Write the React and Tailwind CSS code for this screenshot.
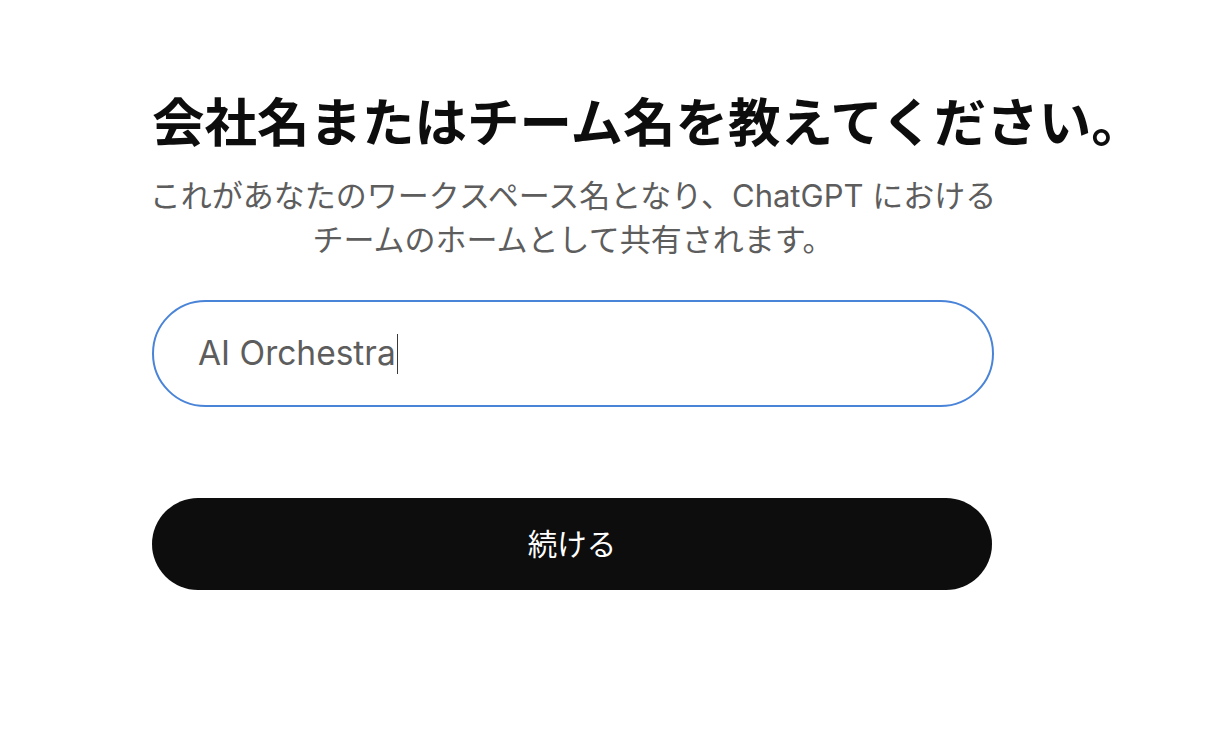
import React from "react";

const font = { fontFamily: 'Inter, "Noto Sans CJK JP", sans-serif' };

export default function App() {
  return (
    <div className="min-h-screen bg-white" style={font}>
      <div className="ml-[152px] w-[842px] pt-[92px] flex flex-col">
        <h1 className="text-center whitespace-nowrap text-[52.5px] leading-[62px] font-bold text-[#0d0d0d]">
          会社名またはチーム名を教えてください。
        </h1>
        <p className="-mx-[20px] mt-[20px] text-center whitespace-nowrap text-[31px] leading-[44px] text-[#5d5d5d]">
          これがあなたのワークスペース名となり、ChatGPT における
          <br />
          チームのホームとして共有されます。
        </p>

        <div className="mt-[38px] h-[107px] rounded-full border-2 border-[#4a84d8] flex items-center pl-[44px]">
          <span className="text-[33.5px] text-[#5d5d5d]">AI Orchestra</span>
          <span className="ml-[1px] w-[1.5px] h-[40px] bg-[#3a3a3a]" />
        </div>

        <button
          type="button"
          className="mt-[91px] h-[92px] w-[840px] rounded-full bg-[#0d0d0d] text-white text-[29.5px] flex items-center justify-center"
        >
          続ける
        </button>
      </div>
    </div>
  );
}
